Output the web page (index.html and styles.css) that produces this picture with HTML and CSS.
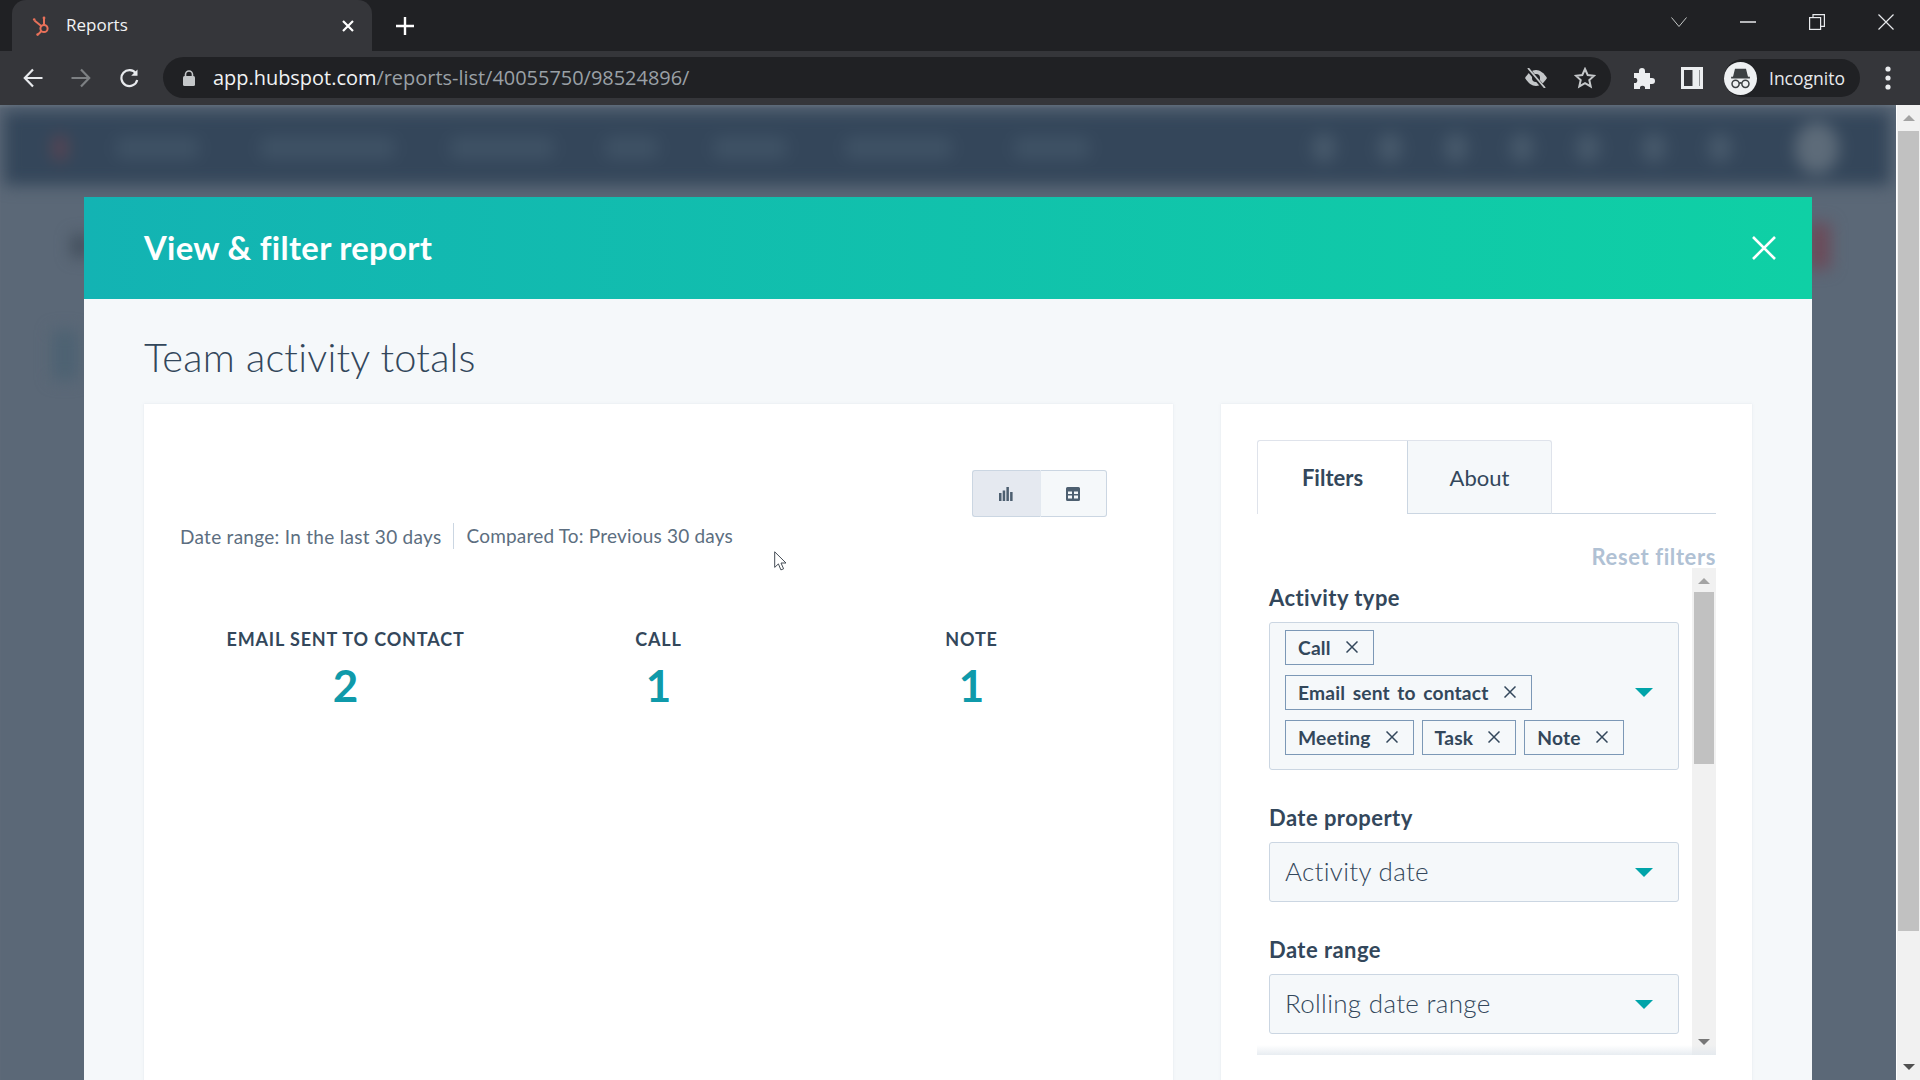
FILE: index.html
```html
<!DOCTYPE html>
<html lang="en">
<head>
<meta charset="utf-8">
<title>Reports</title>
<link rel="stylesheet" href="styles.css">
</head>
<body>
<header class="browser">
  <div class="tabstrip">
    <div class="tab">
      <svg class="favicon" viewBox="0 0 20 20" width="20" height="20" fill="none" stroke="#e8715a" stroke-width="2"><circle cx="12" cy="12.5" r="3.6"/><path d="M12 9V3M9.2 10 2.5 4.5M9.5 15l-3.5 3.5"/><circle cx="2.2" cy="3.5" r="1.3" fill="#e8715a" stroke="none"/><circle cx="12" cy="2" r="1.4" fill="#e8715a" stroke="none"/><circle cx="5.6" cy="18.6" r="1.3" fill="#e8715a" stroke="none"/></svg>
      <span class="tab-title">Reports</span>
      <svg class="tab-close" viewBox="0 0 12 12" width="12" height="12" stroke="#fff" stroke-width="2.2"><path d="M1 1l10 10M11 1 1 11"/></svg>
    </div>
    <svg class="newtab" viewBox="0 0 18 18" width="18" height="18" stroke="#fff" stroke-width="2.4"><path d="M9 0v18M0 9h18"/></svg>
    <div class="winctl">
      <svg viewBox="0 0 16 10" width="16" height="10" fill="none" stroke="#c4c7c5" stroke-width="1"><path d="M.5.5 8 9.5 15.500.5"/></svg>
      <svg viewBox="0 0 16 2" width="16" height="2" stroke="#e8eaed" stroke-width="1.500"><path d="M0 1h16"/></svg>
      <svg viewBox="0 0 16 16" width="16" height="16" fill="none" stroke="#e8eaed" stroke-width="1.200"><rect x=".6" y="3.600" width="11" height="11.800"/><path d="M4 3.500V.6h11.400v11.800h-3.800"/></svg>
      <svg viewBox="0 0 16 16" width="16" height="16" stroke="#e8eaed" stroke-width="1.200"><path d="M.5.5l15 15M15.500.5l-15 15"/></svg>
    </div>
  </div>
  <div class="toolbar">
    <svg class="navicon" viewBox="0 0 20 20" width="20" height="20" fill="none" stroke="#e8eaed" stroke-width="2.200"><path d="M19.500 10H2M10 1.500 1.800 10l8.200 8.500"/></svg>
    <svg class="navicon" viewBox="0 0 20 20" width="20" height="20" fill="none" stroke="#7d8083" stroke-width="2.200"><path d="M.5 10H18M10 1.500l8.200 8.500-8.200 8.500"/></svg>
    <svg class="navicon" viewBox="0 0 20 20" width="20" height="20" fill="none" stroke="#e8eaed" stroke-width="2.200"><path d="M17 5.500A8 8 0 1 0 18.200 12"/><path d="M18.500 1.500v6.300h-6.300z" fill="#e8eaed" stroke="none"/></svg>
    <div class="omnibox">
      <svg class="lock" viewBox="0 0 12 16" width="12" height="16"><path d="M2.500 6.500V4.500a3.500 3.500 0 0 1 7 0v2" fill="none" stroke="#c4c7c9" stroke-width="1.600"/><rect y="6" width="12" height="10" rx="1.500" fill="#c4c7c9"/></svg>
      <span class="url"><span class="url-host">app.hubspot.com</span>/reports-list/40055750/98524896/</span>
      <span class="omni-icons">
        <svg viewBox="0 0 24 20" width="24" height="20"><path d="M1 10c3-5 7-8 11-8s8 3 11 8c-3 5-7 8-11 8s-8-3-11-8z" fill="#c4c7c9"/><circle cx="12" cy="10" r="4" fill="#202124"/><path d="M3 0l17 20" stroke="#202124" stroke-width="4"/><path d="M4 0l17 20" stroke="#c4c7c9" stroke-width="1.800"/></svg>
        <svg viewBox="0 0 22 22" width="22" height="22" fill="none" stroke="#c4c7c9" stroke-width="2"><path d="M11 2l2.700 6 6.400.7-4.800 4.300 1.400 6.400L11 16.100l-5.700 3.300 1.400-6.400-4.800-4.300 6.400-.7z"/></svg>
      </span>
    </div>
    <div class="ext-icons">
      <svg viewBox="0 0 22 22" width="22" height="22" fill="#eceef0"><path d="M1 6h5V4a3 3 0 0 1 6 0v2h5v5h2a3 3 0 0 1 0 6h-2v5h-5v-2a3 3 0 0 0-5 0v2H1v-6h2a3 3 0 0 0 0-5H1z"/></svg>
      <svg viewBox="0 0 22 22" width="22" height="22" fill="none" stroke="#eceef0" stroke-width="3"><rect x="1.500" y="1.500" width="19" height="19"/><path d="M15 1v20" stroke-width="7"/></svg>
    </div>
    <div class="profile">
      <span class="avatar">
        <svg viewBox="0 0 28 28" width="28" height="28" fill="none" stroke="#3c4043" stroke-width="1.700"><path d="M8.500 4h11l2 8h-15z" fill="#3c4043"/><path d="M3.500 13h21" stroke-width="2"/><circle cx="8.500" cy="20" r="4"/><circle cx="19.500" cy="20" r="4"/><path d="M12.500 19.500c1-.8 2-.8 3 0"/></svg>
      </span>
      <span class="profile-name">Incognito</span>
    </div>
    <svg class="menu-dots" viewBox="0 0 6 24" width="6" height="24" fill="#eceef0"><circle cx="3" cy="3" r="2.600"/><circle cx="3" cy="12" r="2.600"/><circle cx="3" cy="21" r="2.600"/></svg>
  </div>
</header>

<div class="viewport">
  <main class="page">
    <div class="blurnav" aria-hidden="true">
      <i class="bn-red"></i><i class="bn-w83"></i><i class="bn-w135"></i><i class="bn-w104"></i><i class="bn-w53"></i><i class="bn-w74"></i><i class="bn-w107"></i><i class="bn-w76"></i>
      <span class="bn-dots"><b></b><b></b><b></b><b></b><b></b><b></b><b></b></span>
      <i class="bn-avatar"></i>
    </div>
    <i class="blur-spot spot-red" aria-hidden="true"></i>
    <i class="blur-spot spot-left" aria-hidden="true"></i>
    <i class="blur-spot spot-left2" aria-hidden="true"></i>

    <section class="modal">
      <div class="modal-head">
        <h1 class="modal-title">View &amp; filter report</h1>
        <svg class="modal-close" viewBox="0 0 24 24" width="24" height="24" stroke="#fff" stroke-width="2.600"><path d="M1 1l22 22M23 1 1 23"/></svg>
      </div>
      <div class="modal-body">
        <h2 class="report-title">Team activity totals</h2>
        <div class="columns">
          <div class="card chart-card">
            <div class="view-toggle">
              <button class="toggle-btn is-active" type="button">
                <svg viewBox="0 0 14 14" width="14" height="14" fill="#4d5f70"><rect y="6" width="2.500" height="8"/><rect x="3.700" y="3.500" width="2.500" height="10.500"/><rect x="7.400" width="2.500" height="14"/><rect x="11.100" y="5" width="2.500" height="9"/></svg>
              </button>
              <button class="toggle-btn" type="button">
                <svg viewBox="0 0 14 14" width="14" height="14" fill="#4d5f70"><path d="M1.500 0h11A1.500 1.500 0 0 1 14 1.500v11a1.500 1.500 0 0 1-1.500 1.500h-11A1.500 1.500 0 0 1 0 12.500v-11A1.500 1.500 0 0 1 1.500 0zM2 4.500V7h4V4.500zm6 0V7h4V4.500zM2 8.500V11.500h4v-3zm6 0v3h4v-3z" fill-rule="evenodd"/></svg>
              </button>
            </div>
            <div class="date-meta">
              <span class="meta-item">Date range: In the last 30 days</span>
              <span class="meta-item meta-second">Compared To: Previous 30 days</span>
            </div>
            <div class="stats">
              <div class="stat"><div class="stat-label">EMAIL SENT TO CONTACT</div><div class="stat-value">2</div></div>
              <div class="stat"><div class="stat-label">CALL</div><div class="stat-value">1</div></div>
              <div class="stat"><div class="stat-label">NOTE</div><div class="stat-value">1</div></div>
            </div>
            <svg class="cursor" viewBox="0 0 13 20" width="13" height="20"><path d="M.7.8v15.600l3.700-3.500 2.500 6 2.700-1.100-2.600-5.800h5z" fill="#fff" stroke="#444c55" stroke-width="1"/></svg>
          </div>

          <div class="card filter-card">
            <div class="tabs">
              <div class="tabitem is-current">Filters</div>
              <div class="tabitem">About</div>
            </div>
            <div class="reset-row"><span class="reset">Reset filters</span></div>
            <div class="filter-scroll">
              <div class="filter-fields">
                <div class="field">
                  <div class="field-label">Activity type</div>
                  <div class="multiselect">
                    <div class="tags">
                      <div class="tag-row">
                        <span class="tag">Call<svg class="tag-x" viewBox="0 0 12 12" width="12" height="12"><path d="M.5.5l11 11M11.500.5l-11 11"/></svg></span>
                      </div>
                      <div class="tag-row">
                        <span class="tag">Email sent to contact<svg class="tag-x" viewBox="0 0 12 12" width="12" height="12"><path d="M.5.5l11 11M11.500.5l-11 11"/></svg></span>
                      </div>
                      <div class="tag-row">
                        <span class="tag">Meeting<svg class="tag-x" viewBox="0 0 12 12" width="12" height="12"><path d="M.5.5l11 11M11.500.5l-11 11"/></svg></span>
                        <span class="tag">Task<svg class="tag-x" viewBox="0 0 12 12" width="12" height="12"><path d="M.5.5l11 11M11.500.5l-11 11"/></svg></span>
                        <span class="tag">Note<svg class="tag-x" viewBox="0 0 12 12" width="12" height="12"><path d="M.5.5l11 11M11.500.5l-11 11"/></svg></span>
                      </div>
                    </div>
                    <i class="caret"></i>
                  </div>
                </div>
                <div class="field">
                  <div class="field-label">Date property</div>
                  <div class="select"><span class="select-value">Activity date</span><i class="caret"></i></div>
                </div>
                <div class="field">
                  <div class="field-label">Date range</div>
                  <div class="select"><span class="select-value">Rolling date range</span><i class="caret"></i></div>
                </div>
              </div>
              <div class="inner-scrollbar">
                <i class="arrow-up small"></i>
                <div class="track"><div class="thumb inner-thumb"></div></div>
                <i class="arrow-down small"></i>
              </div>
              <div class="scroll-fade"></div>
            </div>
          </div>
        </div>
      </div>
    </section>
  </main>
  <aside class="scrollbar">
    <div class="sb-btn"><i class="arrow-up"></i></div>
    <div class="track"><div class="thumb outer-thumb"></div></div>
    <div class="sb-btn"><i class="arrow-down dark"></i></div>
  </aside>
</div>
</body>
</html>
```

FILE: styles.css
```css
* { box-sizing: border-box; }
html, body { margin: 0; height: 100%; overflow: hidden; }
body { width: 1920px; height: 1080px; background: #5b6877; font-family: "Lato", "Liberation Sans", sans-serif; display: flex; flex-direction: column; }
svg { display: block; flex: none; }
i { display: block; }

/* browser chrome */
.browser { height: 105px; flex: none; font-family: "Open Sans", "Liberation Sans", sans-serif; }
.tabstrip { height: 51px; background: #202124; display: flex; align-items: center; padding-left: 12px; }
.tab { width: 360px; height: 51px; background: #35363a; border-radius: 14px 14px 0 0; display: flex; align-items: center; padding: 0 18px 0 20px; }
.favicon { margin-right: 14px; }
.tab-title { color: #f1f3f4; font-size: 17px; flex: 1; margin-top: -2px; }
.newtab { margin-left: 24px; }
.winctl { margin-left: auto; align-self: stretch; display: flex; align-items: center; gap: 53px; padding: 0 26px 8px 0; }
.toolbar { height: 54px; background: #35363a; display: flex; align-items: center; padding-left: 23px; }
.navicon { margin-right: 28px; }
.toolbar .navicon:nth-child(3) { margin-right: 24px; }
.omnibox { width: 1448px; height: 41px; margin-top: -1px; background: #202124; border-radius: 21px; display: flex; align-items: center; padding: 0 15px 0 20px; }
.lock { margin-right: 18px; }
.url { color: #9aa0a6; font-size: 19.950px; flex: 1; white-space: nowrap; }
.url-host { color: #f1f3f4; }
.omni-icons { display: flex; align-items: center; gap: 26px; }
.ext-icons { display: flex; align-items: center; gap: 26px; margin-left: 22px; }
.profile { width: 136px; height: 38px; margin-left: 21px; background: #202124; border-radius: 19px; display: flex; align-items: center; }
.avatar { width: 33px; height: 33px; border-radius: 50%; background: #eef0f2; display: flex; align-items: center; justify-content: center; margin-right: 12px; }
.avatar svg { width: 25px; height: 25px; }
.profile-name { color: #e8eaed; font-size: 17.500px; }
.menu-dots { margin-left: 25px; }

/* page */
.viewport { flex: 1; min-height: 0; display: flex; }
.page { flex: 1; min-width: 0; position: relative; overflow: hidden; background: #5b6877; box-shadow: inset 0 3px 3px -1px #6b7783; }
.blurnav { height: 74px; margin: 6px 6px 0 4px; background: #34465a; filter: blur(8px); display: flex; align-items: center; padding-left: 49px; }
.blurnav i, .bn-dots b { background: #3f5265; height: 22px; border-radius: 8px; }
.blurnav .bn-red { width: 14px; height: 26px; background: #5c4552; margin-right: 49px; }
.bn-w83 { width: 83px; margin-right: 61px; }
.bn-w135 { width: 135px; margin-right: 55px; }
.bn-w104 { width: 104px; margin-right: 51px; }
.bn-w53 { width: 53px; margin-right: 55px; }
.bn-w74 { width: 74px; margin-right: 58px; }
.bn-w107 { width: 107px; margin-right: 62px; }
.bn-w76 { width: 76px; }
.bn-dots { display: flex; gap: 42px; margin-left: 222px; }
.bn-dots b { display: block; width: 24px; height: 30px; border-radius: 50%; background: #47596b; }
.blurnav .bn-avatar { width: 44px; height: 52px; border-radius: 50%; margin-left: 63px; background: #5d6b79; }
.blur-spot { position: absolute; filter: blur(8px); }
.spot-red { left: 1808px; top: 118px; width: 22px; height: 46px; background: #6c4a58; }
.spot-left { left: 72px; top: 130px; width: 16px; height: 22px; background: #3f4b59; }
.spot-left2 { left: 52px; top: 225px; width: 26px; height: 50px; background: #4d6272; }

.modal { position: relative; margin: 12px 0 0 84px; width: 1728px; height: 900px; background: #f5f8fa; }
.modal-head { height: 102px; background: linear-gradient(90deg, #13b3b3 0%, #0fd0a5 100%); display: flex; align-items: center; justify-content: space-between; padding: 0 36px 0 60px; }
.modal-title { margin: -2px 0 0; color: #fff; font-size: 32.800px; font-weight: 700; letter-spacing: .3px; }
.modal-body { padding: 34px 60px 0; }
.report-title { margin: 0 0 23px; height: 48px; line-height: 48px; color: #33475b; font-size: 39.800px; font-weight: 300; letter-spacing: .2px; }
.columns { display: flex; gap: 48px; align-items: flex-start; }
.card { position: relative; background: #fff; box-shadow: 0 0 2px rgba(203,214,226,.5); height: 700px; }

.chart-card { width: 1029px; padding: 66px 36px 0; }
.view-toggle { display: flex; justify-content: flex-end; padding-right: 30px; }
.toggle-btn { width: 67.500px; height: 47px; padding: 0; border: 1px solid #cbd6e2; background: #f5f8fa; display: flex; align-items: center; justify-content: center; }
.toggle-btn:first-child { border-radius: 3px 0 0 3px; border-right: 0; }
.toggle-btn:last-child { border-radius: 0 3px 3px 0; border-left: 1px solid #e3e9f0; }
.toggle-btn.is-active { background: #e5e9f0; }
.date-meta { display: flex; align-items: center; margin-top: 6px; height: 26px; color: #5c6e80; font-size: 19px; letter-spacing: .28px; }
.meta-item { white-space: nowrap; }
.meta-second { margin-left: 12px; padding-left: 12px; border-left: 1px solid #cbd6e2; line-height: 26px; letter-spacing: .2px; }
.stats { display: grid; grid-template-columns: repeat(3, 313px); margin: 77px 0 0 9px; }
.stat { text-align: center; }
.stat-label { color: #33475b; font-size: 18px; line-height: 26px; font-weight: 700; letter-spacing: .85px; }
.stat-value { color: #0f9aaa; font-size: 44px; line-height: 54px; font-weight: 700; margin-top: 6px; }
.cursor { position: absolute; left: 630px; top: 147px; }

.filter-card { width: 531px; padding: 36px 36px 0; }
.tabs { display: flex; border-bottom: 1px solid #cbd6e2; height: 74px; }
.tabitem { height: 74px; display: flex; align-items: center; justify-content: center; font-size: 22px; color: #33475b; width: 145px; background: #f5f8fa; border: 1px solid #dfe3eb; border-bottom: 1px solid #cbd6e2; border-left: 1px solid #cbd6e2; border-radius: 0 3px 0 0; }
.tabitem.is-current { width: 150px; background: #fff; border: 1px solid #dfe3eb; border-right: 0; border-bottom: 0; border-radius: 3px 0 0 0; font-weight: 700; height: 74px; }
.reset-row { display: flex; justify-content: flex-end; margin-top: 31px; height: 23px; }
.reset { color: #b0c1d4; font-size: 22px; font-weight: 700; line-height: 24px; letter-spacing: .6px; }
.filter-scroll { position: relative; display: flex; height: 487px; margin-top: 0; }
.filter-fields { width: 435px; padding: 16px 13px 0 12px; flex: none; }
.field { margin-bottom: 34px; }
.field-label { color: #33475b; font-size: 22px; font-weight: 700; line-height: 28px; margin-bottom: 10px; letter-spacing: .45px; }
.multiselect { display: flex; align-items: center; justify-content: space-between; height: 148px; width: 410px; background: #f5f8fa; border: 1px solid #cbd6e2; border-radius: 3px; padding: 4px 25px 12px 15px; }
.tags { display: flex; flex-direction: column; gap: 10px; }
.tag-row { display: flex; gap: 8px; }
.tag { display: inline-flex; align-items: center; height: 35px; padding: 0 15px 0 12px; background: #f5f8fa; border: 1px solid #7c98b6; color: #33475b; font-size: 19.200px; font-weight: 700; letter-spacing: .2px; word-spacing: 2.500px; }
.tag-x { margin-left: 15px; fill: none; stroke: #33475b; stroke-width: 1.500; }
.caret { width: 0; height: 0; border-left: 9px solid transparent; border-right: 9px solid transparent; border-top: 9px solid #00a4a9; flex: none; }
.select { display: flex; align-items: center; justify-content: space-between; width: 410px; height: 60px; background: #f5f8fa; border: 1px solid #cbd6e2; border-radius: 3px; padding: 0 25px 0 15px; color: #33475b; font-size: 26px; font-weight: 300; letter-spacing: .3px; }
.select-value { margin-top: -3px; }
.inner-scrollbar { width: 24px; margin-left: auto; height: 100%; background: #f1f1f1; display: flex; flex-direction: column; align-items: center; }
.inner-scrollbar .arrow-up { margin: 10px 0 8px; }
.inner-scrollbar .track { flex: 1; width: 100%; padding: 0 2px; }
.inner-thumb { height: 172px; background: #c1c1c1; }
.inner-scrollbar .arrow-down { margin: 0 0 10px; }
.scroll-fade { position: absolute; left: 0; right: 0; bottom: 0; height: 10px; background: linear-gradient(180deg, rgba(226,232,238,0), rgba(226,232,238,.8)); }

.arrow-up { width: 0; height: 0; border-left: 6px solid transparent; border-right: 6px solid transparent; border-bottom: 6px solid #a3a3a3; }
.arrow-down { width: 0; height: 0; border-left: 6px solid transparent; border-right: 6px solid transparent; border-top: 6px solid #777; }
.arrow-down.dark { border-top-color: #505050; }

.scrollbar { width: 24px; flex: none; background: #f1f1f1; display: flex; flex-direction: column; border-left: 1px solid #fff; }
.sb-btn { height: 26px; flex: none; display: flex; align-items: center; justify-content: center; }
.scrollbar .track { flex: 1; padding: 0 1px; }
.outer-thumb { height: 800px; background: #c1c1c1; }
```
